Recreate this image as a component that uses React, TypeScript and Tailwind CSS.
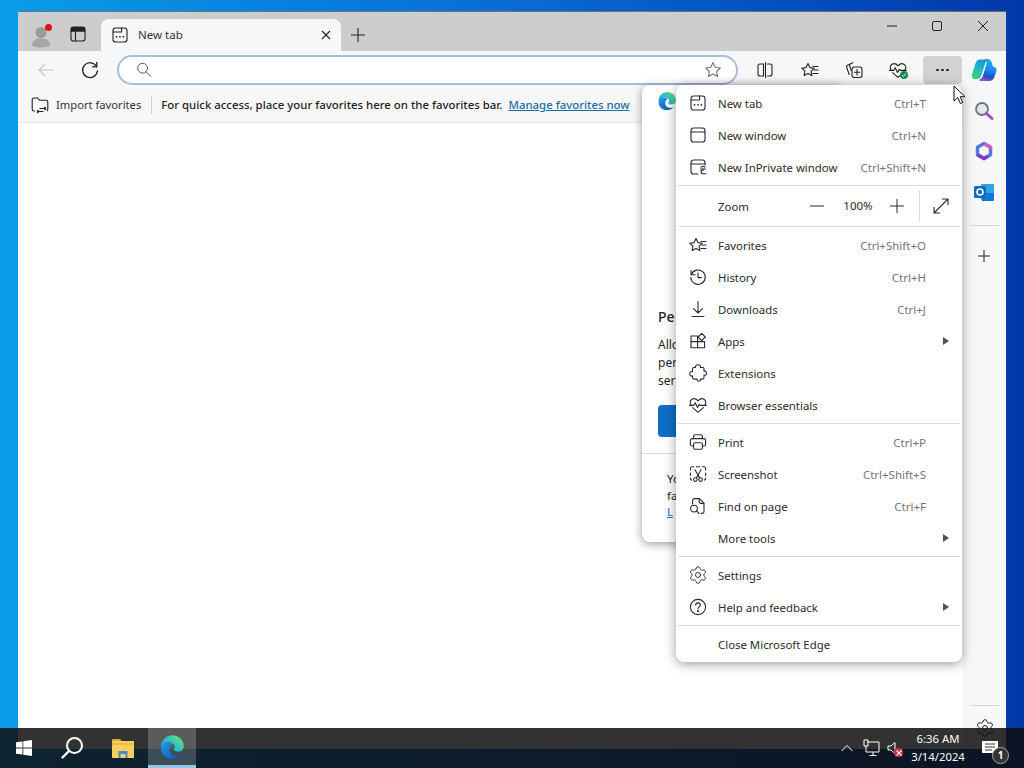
import React from 'react'
import { Settings } from 'lucide-react'

const S = ({ size = 20, children, className = '' }: { size?: number; children: React.ReactNode; className?: string }) => (
  <svg width={size} height={size} viewBox="0 0 20 20" fill="none" stroke="currentColor" strokeWidth="1.1" strokeLinecap="round" strokeLinejoin="round" className={className}>
    {children}
  </svg>
)

const dots = (
  <g fill="currentColor" stroke="none">
    <rect x="5.8" y="11" width="1.5" height="1.5" />
    <rect x="9.2" y="11" width="1.5" height="1.5" />
    <rect x="12.6" y="11" width="1.5" height="1.5" />
  </g>
)

const NewTabIcon = () => (
  <S>
    <rect x="3" y="3" width="14" height="14" rx="2.6" />
    <path d="M3 7h8.6V3" />
    {dots}
  </S>
)
const WindowIcon = () => (
  <S>
    <rect x="3" y="3" width="14" height="14" rx="2.6" />
    <path d="M3 7h14" />
  </S>
)
const InPrivateIcon = () => (
  <S>
    <path d="M10 17H5.6A2.6 2.6 0 0 1 3 14.4V5.6A2.6 2.6 0 0 1 5.6 3h8.8A2.6 2.6 0 0 1 17 5.6V8" />
    <path d="M3 7h14" />
    <path d="M12.5 12h5M13 10.2c.8-1 3.2-1 4 0M13 14.500c0-1 1-1.500 2.500-1.500M13 14.500c0 1.500 1 2.300 2.500 2.300h2.500" />
  </S>
)
const StarPath = 'M8.5 2.6l1.9 4 4.4.6-3.2 3 .8 4.4-3.9-2.1-3.9 2.1.8-4.4-3.2-3 4.4-.6z'
const FavoritesIcon = () => (
  <S>
    <path d={StarPath} transform="translate(-.5 1)" />
    <path d="M13 6.5h5M14 10h4M13 13.5h5" />
  </S>
)
const HistoryIcon = () => (
  <S>
    <path d="M3.3 7.5A7.2 7.2 0 1 1 2.8 10.5" />
    <path d="M3 3.6v4.1h4.1" />
    <path d="M10 6v4.6h3.4" />
  </S>
)
const DownloadIcon = () => (
  <S>
    <path d="M10 2.5v11.5M5.5 9.6L10 14l4.5-4.4M4 17.5h12" />
  </S>
)
const AppsIcon = () => (
  <S>
    <path d="M3 5h6.6v11.8H3zM3 10.6h13.6v6.2H9.6" />
    <path d="M13.7 2.4l3.6 3.6-3.6 3.6-3.6-3.6z" />
  </S>
)
const ExtensionsIcon = () => (
  <S>
    <path d="M7.500 4.500c-.3-1.800 1-2.800 2.500-2.800s2.800 1 2.500 2.800h2.200c.9 0 1.300.5 1.300 1.300v2.400c1.700-.4 2.500.7 2.500 2s-.8 2.400-2.500 2v2.400c0 .9-.5 1.500-1.300 1.500H12.500c.3 1.400-.7 2.200-1.700 2.200s-2-.8-1.700-2.200H6c-.9 0-1.500-.6-1.500-1.500v-1.600c-1.800.4-2.800-.9-2.800-2.200s1-2.600 2.800-2.200V5.800c0-.8.500-1.300 1.300-1.300z" />
  </S>
)
const EssentialsIcon = () => (
  <S>
    <path d="M3 9.8C1.2 7.5 2.6 3.6 6 3.6c1.800 0 3 1 4 2.200 1-1.200 2.200-2.200 4-2.200 3.400 0 4.800 3.900 3 6.200" />
    <path d="M1.500 10.400h4.200l1.500-2.600 2.300 4.600 1.800-3 1 1h6" />
    <path d="M4.600 12.600l5.400 4.800 5.400-4.800" />
  </S>
)
const PrintIcon = () => (
  <S>
    <path d="M5.600 6.600V4.400c0-1 .7-1.700 1.700-1.700h5.400c1 0 1.700.7 1.700 1.700v2.200" />
    <path d="M5.400 14H4.200a1.800 1.800 0 0 1-1.800-1.800V8.600c0-1.100.9-2 2-2h11.200c1.100 0 2 .9 2 2v3.600a1.800 1.800 0 0 1-1.800 1.800h-1.200" />
    <rect x="5.600" y="10.800" width="8.800" height="6.400" rx="1.400" />
  </S>
)
const ScreenshotIcon = () => (
  <S>
    <path d="M2.400 6V4.600c0-1 .8-1.800 1.800-1.800h1.400M8.400 2.800h3.200M14.400 2.800h1.400c1 0 1.800.8 1.800 1.800V6M17.600 9v2.400M2.400 9v2.400M2.400 14v.6c0 .7.5 1.300 1.200 1.500M17.600 14v.6c0 .7-.5 1.300-1.200 1.500" />
    <path d="M7 5.800l4.600 8M13 5.800l-4.600 8" />
    <circle cx="7.400" cy="15.600" r="1.800" />
    <circle cx="12.600" cy="15.600" r="1.800" />
  </S>
)
const FindIcon = () => (
  <S>
    <path d="M4.600 8V4.400c0-1 .8-1.800 1.800-1.800h5l4.600 4.600v8.400c0 1-.8 1.800-1.800 1.800h-1" />
    <path d="M11.200 2.800v3c0 .9.6 1.600 1.600 1.600h3" />
    <circle cx="6" cy="12.600" r="3.400" />
    <path d="M8.500 15l2.600 2.600" />
  </S>
)
const HelpIcon = () => (
  <S>
    <circle cx="10" cy="10" r="7.600" />
    <path d="M7.700 8.100c0-1.300 1-2.200 2.300-2.200s2.300.9 2.300 2.100c0 1.900-2.300 1.800-2.300 3.700" />
    <circle cx="10" cy="14" r=".5" fill="currentColor" />
  </S>
)

type Row = { label: string; key?: string; icon?: React.ReactNode; sub?: boolean }

const groups: Row[][] = [
  [
    { label: 'New tab', key: 'Ctrl+T', icon: <NewTabIcon /> },
    { label: 'New window', key: 'Ctrl+N', icon: <WindowIcon /> },
    { label: 'New InPrivate window', key: 'Ctrl+Shift+N', icon: <InPrivateIcon /> },
  ],
  [
    { label: 'Favorites', key: 'Ctrl+Shift+O', icon: <FavoritesIcon /> },
    { label: 'History', key: 'Ctrl+H', icon: <HistoryIcon /> },
    { label: 'Downloads', key: 'Ctrl+J', icon: <DownloadIcon /> },
    { label: 'Apps', icon: <AppsIcon />, sub: true },
    { label: 'Extensions', icon: <ExtensionsIcon /> },
    { label: 'Browser essentials', icon: <EssentialsIcon /> },
  ],
  [
    { label: 'Print', key: 'Ctrl+P', icon: <PrintIcon /> },
    { label: 'Screenshot', key: 'Ctrl+Shift+S', icon: <ScreenshotIcon /> },
    { label: 'Find on page', key: 'Ctrl+F', icon: <FindIcon /> },
    { label: 'More tools', sub: true },
  ],
  [
    { label: 'Settings', icon: <Settings size={20} strokeWidth={1.1} />, },
    { label: 'Help and feedback', icon: <HelpIcon />, sub: true },
  ],
  [{ label: 'Close Microsoft Edge' }],
]

function MenuRow({ row }: { row: Row }) {
  return (
    <div className="flex h-8 items-center text-[#2b2b2b]">
      <div className="flex w-[42px] justify-center pl-[2px]">{row.icon}</div>
      <span className="flex-1 pt-px text-[11.4px]">{row.label}</span>
      {row.key && <span className="mr-9 pt-px text-[#757575]">{row.key}</span>}
      {row.sub && <span className="mr-[13px] h-0 w-0 border-y-[4px] border-l-[6px] border-y-transparent border-l-[#505050]" />}
    </div>
  )
}

const Sep = () => <div className="mx-0.5 my-0.5 h-px bg-[#dcdcdc]" />

function EdgeLogo({ size = 32, id }: { size?: number; id: string }) {
  return (
    <svg width={size} height={size} viewBox="0 0 32 32">
      <defs>
        <linearGradient id={`${id}a`} x1="0" y1="0" x2="1" y2="1">
          <stop offset="0" stopColor="#1fa0e8" />
          <stop offset="1" stopColor="#0b4fa8" />
        </linearGradient>
        <linearGradient id={`${id}b`} x1="0" y1="1" x2="1" y2="0.2">
          <stop offset="0" stopColor="#1b9de2" />
          <stop offset="0.55" stopColor="#2dc2c8" />
          <stop offset="1" stopColor="#66e36e" />
        </linearGradient>
      </defs>
      <path d="M3 13C1 21 5 30 15 30.500c5 .2 9-1.500 12-5-5 2.500-11 1.500-13-2.500-2-4-.5-8.500 3-10.500C12 9 5 9.500 3 13z" fill={`url(#${id}a)`} />
      <path d="M2.500 14C4 6.500 9.500 1.500 16.500 1.500 24.500 1.500 30.500 8 30.500 15c0 4-3 6.500-7 6.500-3 0-5-1-5.500-2.500 2-1.500 2-5-.5-7C13 8.500 6 9.500 2.500 14z" fill={`url(#${id}b)`} />
    </svg>
  )
}

function CopilotLogo() {
  return (
    <svg width={26} height={26} viewBox="0 0 26 26">
      <defs>
        <linearGradient id="cpa" x1="0.7" y1="0" x2="0.2" y2="1">
          <stop offset="0" stopColor="#1c8fd8" />
          <stop offset="0.5" stopColor="#22bcc0" />
          <stop offset="1" stopColor="#3ccf78" />
        </linearGradient>
        <linearGradient id="cpb" x1="0.6" y1="0" x2="0.4" y2="1">
          <stop offset="0" stopColor="#22a8e0" />
          <stop offset="0.45" stopColor="#1f8cf0" />
          <stop offset="0.8" stopColor="#1c4fc4" />
          <stop offset="1" stopColor="#a24fd0" />
        </linearGradient>
      </defs>
      <path d="M9 2.500h8c-1.500.8-2.200 2-2.700 3.500L10.500 18c-.7 2.500-2.200 4-4.500 4H4C1.500 22 .3 20 1 17.500L4.500 6.500C5.300 4 7 2.500 9 2.500z" fill="url(#cpa)" />
      <path d="M13.500 2h2.500c2.500 0 4 1.500 4.700 3.500l1 3.800 1.300.4c2 .6 3 2.300 2.400 4.500l-1.900 5.600c-.8 2.500-2.500 4.200-5 4.200H9.500c-1.500 0-1.500-1.200-.5-1.800 1.500-.8 2.500-2 3-3.700l3.500-11.500c.6-2-.2-3.500-2-5z" fill="url(#cpb)" />
    </svg>
  )
}

export default function App() {
  return (
    <div className="relative h-[768px] w-[1024px] overflow-hidden bg-linear-to-r from-[#0a9ce9] via-[#0a6cd2] to-[#0437a8] font-['Noto_Sans',sans-serif] text-[11.5px]">
      {/* Browser window */}
      <div className="absolute left-[18px] top-[11px] flex h-[738px] w-[988px] flex-col border-t border-[#5f7488] bg-[#f7f7f7]">
        {/* Title bar */}
        <div className="flex h-[39px] shrink-0 items-end bg-[#cdcdcd] text-[#222]">
          <div className="relative mb-[3px] ml-[11px] flex w-[24px] justify-center self-end pb-0">
            <svg width="22" height="24" viewBox="0 0 22 24">
              <circle cx="11" cy="8.500" r="5.500" fill="#9a9a9a" />
              <path d="M2 21c0-5 4-6.500 9-6.500s9 1.500 9 6.500c0 1.500-4 2.500-9 2.500S2 22.500 2 21z" fill="#a6a6a6" />
            </svg>
            <span className="absolute right-[1px] top-[0px] h-[7px] w-[7px] rounded-full bg-[#e2101a]" />
          </div>
          <div className="mb-[7px] ml-[15px] flex w-[20px] justify-center">
            <S>
              <rect x="3" y="3" width="14" height="14" rx="2.600" />
              <path d="M3 7h14M7.500 7v10" />
              <path d="M3.500 3.500h13v3.500h-13z" fill="currentColor" />
            </S>
          </div>
          <div className="ml-[13px] flex h-8 w-[240px] items-center rounded-t-lg bg-[#f7f7f7] pl-[9px] pr-[9px]">
            <NewTabIcon />
            <span className="ml-2 flex-1 text-[#333]">New tab</span>
            <svg width="12" height="12" viewBox="0 0 12 12" stroke="currentColor" strokeWidth="1.100">
              <path d="M2 2l8 8M10 2l-8 8" />
            </svg>
          </div>
          <div className="mb-[8px] ml-[9px]">
            <svg width="16" height="16" viewBox="0 0 16 16" stroke="currentColor" strokeWidth="1.100">
              <path d="M8 1v14M1 8h14" />
            </svg>
          </div>
          <div className="mb-[18px] ml-auto mr-[16px] flex items-center gap-[33px]">
            <svg width="12" height="12" viewBox="0 0 12 12" stroke="currentColor" strokeWidth="1">
              <path d="M1 6h10" />
            </svg>
            <svg width="12" height="12" viewBox="0 0 12 12" fill="none" stroke="currentColor" strokeWidth="1">
              <rect x="1.500" y="1.500" width="9" height="9" rx="1.500" />
            </svg>
            <svg width="14" height="14" viewBox="0 0 14 14" stroke="currentColor" strokeWidth="1">
              <path d="M2 2l10 10M12 2L2 12" />
            </svg>
          </div>
        </div>

        {/* Toolbar */}
        <div className="flex h-[40px] shrink-0 items-center pb-[2px] text-[#222]">
          <div className="ml-[18px] w-5 text-[#c4c4c4]">
            <S>
              <path d="M17 10H3M9 4l-6 6 6 6" />
            </S>
          </div>
          <div className="ml-[24px] w-5">
            <S>
              <path d="M16.500 6.500A7.400 7.400 0 1 0 17.400 11" strokeWidth="1.300" />
              <path d="M16.800 2.500v4.300h-4.300" strokeWidth="1.300" />
            </S>
          </div>
          <div className="ml-[17px] flex h-[30px] w-[621px] items-center rounded-full border-2 border-[#a8bcdc] bg-white pl-4 pr-[13px]">
            <span className="text-[#555]">
              <S size={18}>
                <circle cx="8.500" cy="8" r="5.500" />
                <path d="M12.500 12l5 5" />
              </S>
            </span>
            <span className="ml-auto text-[#777]">
              <S>
                <path d="M10 2.600l2.200 4.700 5.100.7-3.700 3.500.9 5.100-4.500-2.500-4.500 2.500.9-5.100L2.700 8l5.100-.7z" />
              </S>
            </span>
          </div>
          <div className="ml-[17px] flex w-5">
            <S>
              <path d="M8.500 4H5a2 2 0 0 0-2 2v8a2 2 0 0 0 2 2h3.500zM10.500 2.500v15M12.500 4H15a2 2 0 0 1 2 2v8a2 2 0 0 1-2 2h-2.500" />
            </S>
          </div>
          <div className="ml-[25px] w-5">
            <FavoritesIcon />
          </div>
          <div className="ml-[24px] w-5">
            <S>
              <path d="M5.500 4.500l-1.500.5c-1.200.4-1.700 1.400-1.300 2.500l2.500 7" />
              <path d="M9 2.700l-2 .7C5.800 3.900 5.300 5 5.700 6l1.500 4.500" />
              <rect x="8" y="7" width="10" height="10.500" rx="2.200" />
              <path d="M13 9.500v5.500M10.300 12.200h5.400" />
            </S>
          </div>
          <div className="relative ml-[24px] w-5">
            <EssentialsIcon />
            <span className="absolute bottom-px right-0 flex h-[8px] w-[8px] items-center justify-center rounded-full bg-[#1a8a50]">
              <svg width="6" height="6" viewBox="0 0 6 6" fill="none" stroke="#fff" strokeWidth="1">
                <path d="M1 3l1.400 1.400L5 1.600" />
              </svg>
            </span>
          </div>
          <div className="ml-[15px] flex h-[28px] w-[39px] items-center justify-center gap-[2.500px] rounded-sm bg-[#d2d2d2]">
            <i className="h-[2.500px] w-[2.500px] rounded-full bg-[#222]" />
            <i className="h-[2.500px] w-[2.500px] rounded-full bg-[#222]" />
            <i className="h-[2.500px] w-[2.500px] rounded-full bg-[#222]" />
          </div>
          <div className="ml-[9px]">
            <CopilotLogo />
          </div>
        </div>

        {/* Page + sidebar */}
        <div className="flex min-h-0 flex-1">
          <div className="flex min-w-0 flex-1 flex-col">
            {/* Favorites bar */}
            <div className="flex h-[32px] shrink-0 items-center border-b border-[#e6e6e6] pb-[3px] text-[#222]">
              <div className="ml-[12px]">
                <svg width="20" height="20" viewBox="0 0 20 20" fill="none" stroke="currentColor" strokeWidth="1.100" strokeLinejoin="round">
                  <path d="M5 16H4a1.800 1.800 0 0 1-1.800-1.800V4.800C2.200 3.800 3 3 4 3h3.500l2 2.200h6.500c1 0 1.800.8 1.800 1.800v7.200c0 .8-.4 1.400-1 1.700" />
                  <path d="M7 17h6.500M7 17l1.500-1.500M7 17l1.500 1.500M16 14H9.500M16 14l-1.500-1.500M16 14l-1.500 1.500" transform="translate(0 -.500)" />
                </svg>
              </div>
              <span className="ml-[6px] text-[11.2px] text-[#333]">Import favorites</span>
              <div className="ml-[10px] h-[18px] w-px bg-[#d0d0d0]" />
              <span className="ml-[9px] text-[11.4px] font-medium text-[#1f1f1f]">For quick access, place your favorites here on the favorites bar.</span>
              <span className="ml-[6px] text-[11.4px] font-medium text-[#1c6ea8] underline">Manage favorites now</span>
            </div>
            <div className="flex flex-1">
              <div className="w-[3px] bg-[#f7f7f7]" />
              <div className="flex-1 bg-white" />
            </div>
          </div>

          {/* Sidebar */}
          <div className="flex w-[43px] shrink-0 flex-col items-center bg-[#f7f7f7] pt-[9px] text-[#222]">
            <svg className="-ml-[2px]" width="22" height="22" viewBox="0 0 22 22" fill="none">
              <circle cx="9" cy="9" r="6" fill="#dfe9ec" stroke="#6e7478" strokeWidth="1.800" />
              <path d="M13.500 13.500l5.500 5" stroke="#a14bc8" strokeWidth="3" strokeLinecap="round" />
            </svg>
            <svg className="mt-[18px] -ml-[1px]" width="22" height="22" viewBox="0 0 22 22" fill="none">
              <path d="M11 3.500l6.500 3.700v7.600L11 18.500l-6.500-3.700V7.200z" stroke="#4f78e0" strokeWidth="3.400" strokeLinejoin="round" />
              <path d="M11 3.500l6.500 3.700v2" stroke="#d05fc0" strokeWidth="3.400" strokeLinejoin="round" />
              <path d="M4.500 14.800L11 18.500l4-2.300" stroke="#7a3fc0" strokeWidth="3.400" />
              <circle cx="11" cy="11" r="2.500" fill="#f7f7f7" />
            </svg>
            <svg className="mt-[19px] -ml-[1px]" width="22" height="22" viewBox="0 0 22 22">
              <rect x="8" y="3" width="13" height="16" rx="1" fill="#28a8ea" />
              <path d="M9 12h12v7a1 1 0 0 1-1 1H9z" fill="#0f78d4" />
              <rect x="1" y="5" width="12" height="12" rx="1.500" fill="#0f6cbd" />
              <circle cx="7" cy="11" r="3" fill="none" stroke="#fff" strokeWidth="1.600" />
            </svg>
            <div className="mt-[22px] h-px w-[28px] bg-[#d6d6d6]" />
            <div className="mt-[23px] -ml-[1px]">
              <svg width="14" height="14" viewBox="0 0 14 14" stroke="currentColor" strokeWidth="1">
                <path d="M7 1v12M1 7h12" />
              </svg>
            </div>
            <div className="mt-auto flex flex-col items-center">
              <div className="mb-[12px] h-px w-[28px] bg-[#d6d6d6]" />
              <Settings size={20} strokeWidth={1.200} />
            </div>
            <div className="h-[11px]" />
          </div>
        </div>
      </div>

      {/* Dialog behind the menu */}
      <div className="absolute left-[642px] top-[85px] h-[457px] w-[200px] rounded-lg bg-white text-[#1f1f1f] shadow-[0_2px_10px_rgba(0,0,0,0.4)]">
        <div className="absolute left-[15px] top-[6px]">
          <EdgeLogo size={20} id="dlg" />
        </div>
        <span className="absolute left-4 top-[221px] text-[14px] font-medium">Pe</span>
        <div className="absolute left-4 top-[251px] text-[12px] leading-[18px]">
          <div>Allo</div>
          <div>per</div>
          <div>ser</div>
        </div>
        <div className="absolute left-4 top-[320px] h-8 w-[60px] rounded bg-[#0f6fc6]" />
        <div className="absolute inset-x-0 top-[368px] h-px bg-[#dcdcdc]" />
        <div className="absolute left-[25px] top-[386px] text-[11.500px] leading-[16.500px]">
          <div>Yo</div>
          <div>fa</div>
          <div className="text-[#1c6ea8] underline">L</div>
        </div>
      </div>

      {/* Settings and more menu */}
      <div className="absolute left-[676px] top-[85px] w-[286px] rounded-lg bg-white py-0.5 shadow-[0_2px_12px_rgba(0,0,0,0.4)]">
        {groups[0].map(r => <MenuRow key={r.label} row={r} />)}
        <Sep />
        <div className="flex h-9 items-center text-[#2b2b2b]">
          <span className="ml-[42px] flex-1 pt-px text-[11.4px]">Zoom</span>
          <svg className="mr-[19px]" width="14" height="14" viewBox="0 0 14 14" stroke="currentColor" strokeWidth="1">
            <path d="M0 7h14" />
          </svg>
          <span className="w-[30px] text-center">100%</span>
          <svg className="ml-[17px]" width="14" height="14" viewBox="0 0 14 14" stroke="currentColor" strokeWidth="1">
            <path d="M7 0v14M0 7h14" />
          </svg>
          <div className="ml-[15px] h-8 w-px bg-[#dcdcdc]" />
          <svg className="mx-[13px]" width="16" height="16" viewBox="0 0 16 16" fill="none" stroke="currentColor" strokeWidth="1.100">
            <path d="M1 15L15 1M9 1h6v6M1 9v6h6" />
          </svg>
        </div>
        <Sep />
        {groups[1].map(r => <MenuRow key={r.label} row={r} />)}
        <Sep />
        {groups[2].map(r => <MenuRow key={r.label} row={r} />)}
        <Sep />
        {groups[3].map(r => <MenuRow key={r.label} row={r} />)}
        <Sep />
        {groups[4].map(r => <MenuRow key={r.label} row={r} />)}
      </div>

      {/* Mouse pointer */}
      <svg className="absolute left-[953px] top-[85px]" width="14" height="20" viewBox="0 0 14 20">
        <path d="M1 1v15l3.800-3.500 2.500 6 2.400-1-2.500-5.800H12z" fill="#fff" stroke="#111" strokeWidth="1" strokeLinejoin="round" />
      </svg>

      {/* Taskbar */}
      <div className="absolute inset-x-0 bottom-0 flex h-10 items-center bg-[#0e0e0e]/85 text-white">
        <div className="flex h-full w-12 items-center justify-center">
          <svg width="16" height="16" viewBox="0 0 16 16" fill="#fff">
            <path d="M0 2.300l6.500-.9v6.200H0zM7.300 1.300L16 0v7.600H7.300zM0 8.400h6.500v6.200L0 13.700zM7.300 8.400H16V16l-8.700-1.200z" />
          </svg>
        </div>
        <div className="flex h-full w-12 items-center justify-center">
          <svg width="24" height="24" viewBox="0 0 24 24" fill="none" stroke="#fff">
            <circle cx="14.500" cy="9.500" r="7.500" strokeWidth="2" />
            <path d="M9 15l-6.500 6.500" strokeWidth="2.400" strokeLinecap="round" />
          </svg>
        </div>
        <div className="ml-[3px] flex h-full w-[48px] items-center justify-center">
          <svg width="24" height="22" viewBox="0 0 24 22">
            <path d="M1 3a1 1 0 0 1 1-1h7l2 2.500H1z" fill="#e2a730" />
            <rect x="1" y="4" width="22" height="17" rx="0.500" fill="#f6cf5e" />
            <path d="M1 7h22" stroke="#e2a730" strokeWidth="1" />
            <path d="M7.500 21v-7h9v7h-2v-4h-5v4z" fill="#3f8fce" />
          </svg>
        </div>
        <div className="ml-[1px] flex h-full w-12 items-center justify-center border-b-[3px] border-[#93c7ea] bg-white/20">
          <EdgeLogo size={26} id="bar" />
        </div>
        <div className="ml-auto flex h-full items-center">
          <svg width="14" height="14" viewBox="0 0 14 14" fill="none" stroke="#fff" strokeWidth="1">
            <path d="M1.500 10L7 4.500 12.500 10" />
          </svg>
          <svg className="ml-[8px]" width="18" height="18" viewBox="0 0 18 18" fill="none" stroke="#fff" strokeWidth="1">
            <path d="M5 3h12v10H4M2 1h4v6H2zM4 7v6M11 13v3M7.500 16.500h7" />
          </svg>
          <div className="relative ml-[7px] w-4">
            <svg width="12" height="14" viewBox="0 0 12 14" fill="none" stroke="#fff" strokeWidth="1">
              <path d="M1 5h3l4-3.500v11L4 9H1z" />
            </svg>
            <span className="absolute bottom-[-2px] right-0 flex h-[9px] w-[9px] items-center justify-center rounded-sm bg-[#c9303e]">
              <svg width="6" height="6" viewBox="0 0 6 6" stroke="#fff" strokeWidth="1.100">
                <path d="M.5.500l5 5M5.500.500l-5 5" />
              </svg>
            </span>
          </div>
          <div className="flex w-[70px] flex-col items-center text-[11.300px] leading-[18px]">
            <span>6:36 AM</span>
            <span>3/14/2024</span>
          </div>
          <div className="relative ml-[9px] mr-[22px] w-5">
            <svg width="16" height="14" viewBox="0 0 16 14" fill="#fff">
              <path d="M0 0h16v12H0z" />
              <path d="M3 3h10M3 6h10M3 9h7" stroke="#333" strokeWidth="1" />
            </svg>
            <span className="absolute bottom-[-9px] right-[-7px] flex h-[17px] w-[17px] items-center justify-center rounded-full border border-[#aaa] bg-[#333] text-[10px] font-bold">1</span>
          </div>
        </div>
      </div>
    </div>
  )
}
